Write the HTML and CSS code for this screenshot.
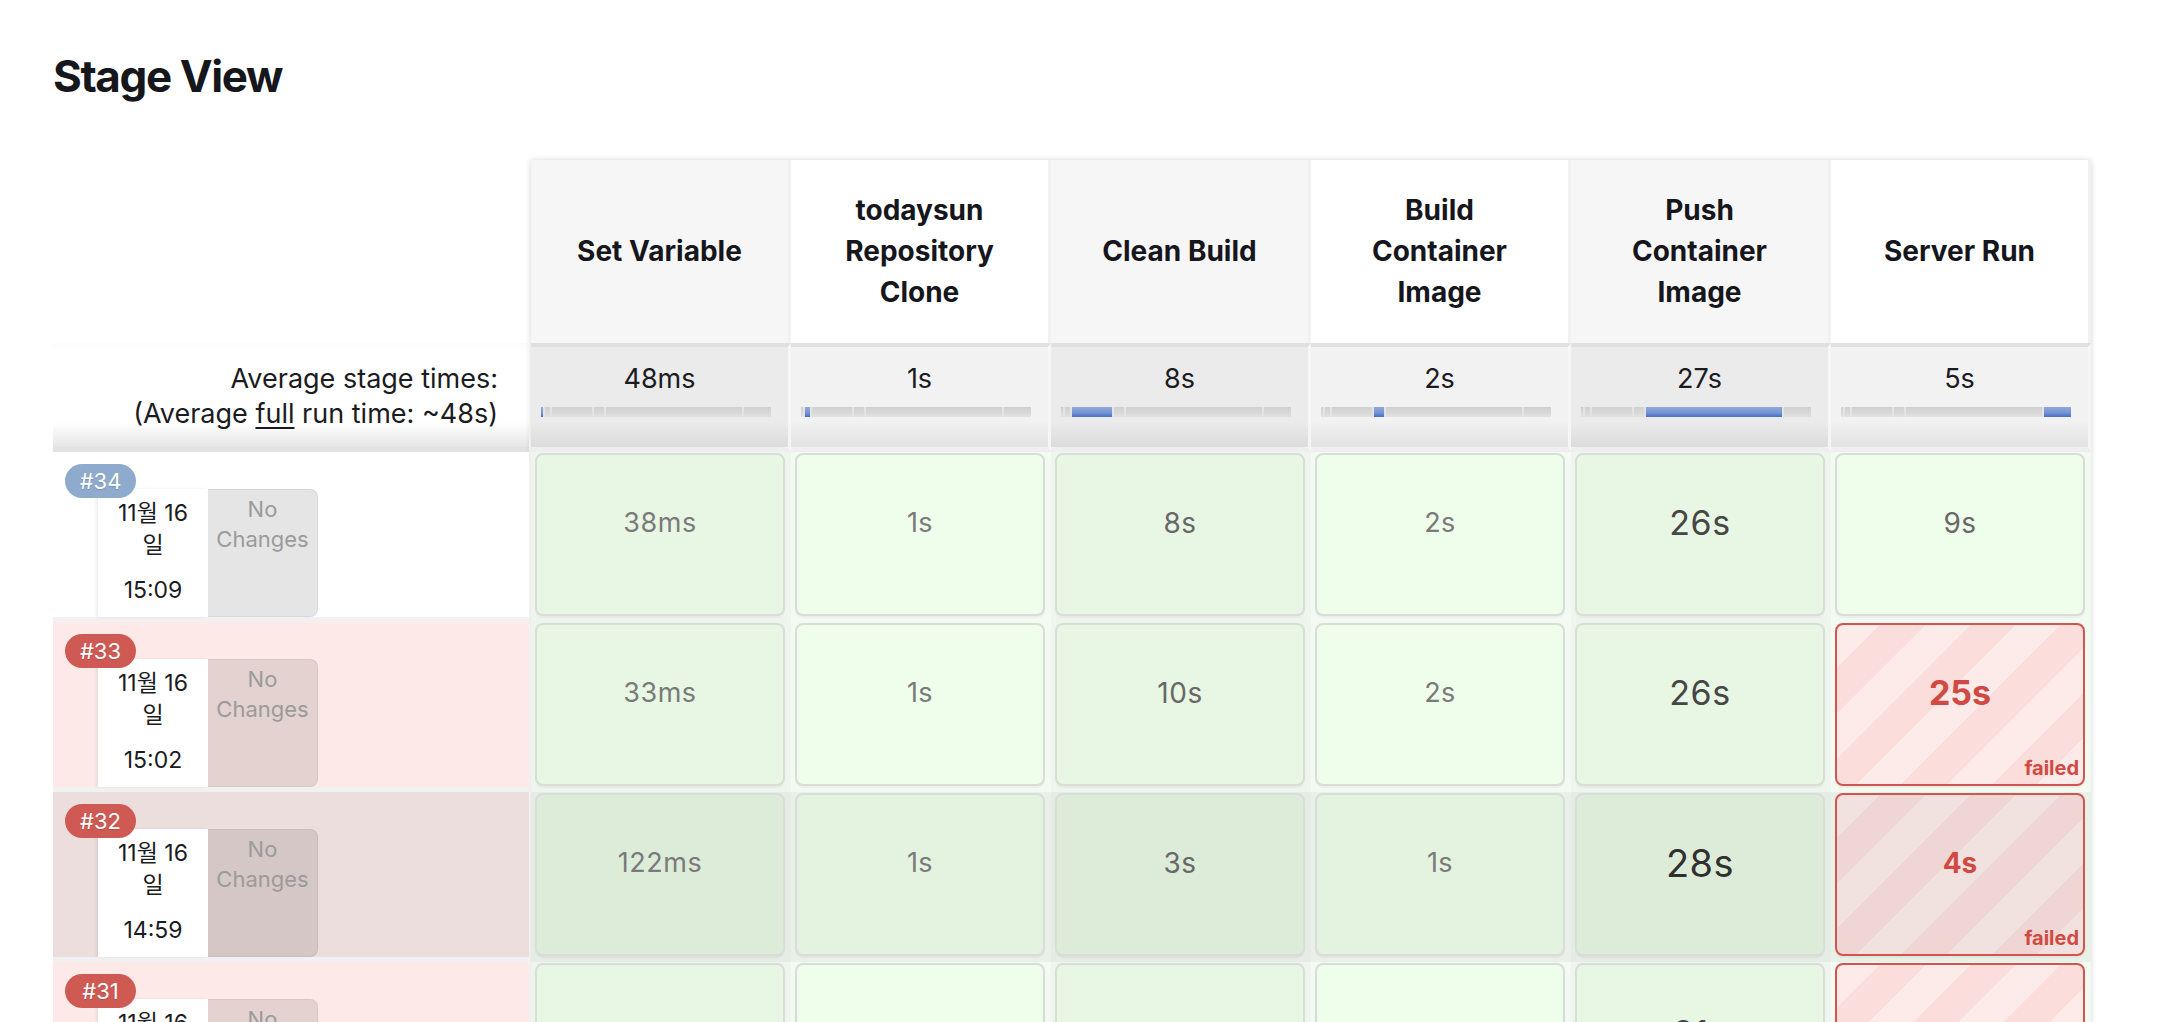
FILE: index.html
```html
<!DOCTYPE html>
<html lang="ko">
<head>
<meta charset="utf-8">
<title>Stage View</title>
<link rel="stylesheet" href="styles.css">
</head>
<body>
<h1 class="title">Stage View</h1>
<div class="table">
  <div class="left">
    <div class="lhead"></div>
    <div class="lavg">
      <div>Average stage times:</div>
      <div>(Average <u>full</u> run time: ~48s)</div>
    </div>
    <div class="lrow">
      <span class="badge ok">#34</span>
      <div class="card"><div>11월 16 일</div><div class="time">15:09</div></div>
      <div class="nochg">No Changes</div>
    </div>
    <div class="lrow fail">
      <span class="badge bad">#33</span>
      <div class="card"><div>11월 16 일</div><div class="time">15:02</div></div>
      <div class="nochg">No Changes</div>
    </div>
    <div class="lrow hot">
      <span class="badge bad">#32</span>
      <div class="card"><div>11월 16 일</div><div class="time">14:59</div></div>
      <div class="nochg">No Changes</div>
    </div>
    <div class="lrow fail">
      <span class="badge bad">#31</span>
      <div class="card"><div>11월 16 일</div><div class="time">14:55</div></div>
      <div class="nochg">No Changes</div>
    </div>
  </div>

  <div class="stages">
    <div class="sh">Set Variable</div>
    <div class="sh alt">todaysun Repository Clone</div>
    <div class="sh">Clean Build</div>
    <div class="sh alt">Build Container Image</div>
    <div class="sh">Push Container Image</div>
    <div class="sh alt">Server Run</div>

    <div class="sa">
      <div class="avg">48ms</div>
      <div class="bar"><span class="seg on" style="width:2px"></span><span class="seg" style="width:7px"></span><span class="seg" style="width:42px"></span><span class="seg" style="width:12px"></span><span class="seg" style="width:138px"></span><span class="seg" style="width:29px"></span></div>
    </div>
    <div class="sa alt">
      <div class="avg">1s</div>
      <div class="bar"><span class="seg" style="width:2px"></span><span class="seg on" style="width:7px"></span><span class="seg" style="width:42px"></span><span class="seg" style="width:12px"></span><span class="seg" style="width:138px"></span><span class="seg" style="width:29px"></span></div>
    </div>
    <div class="sa">
      <div class="avg">8s</div>
      <div class="bar"><span class="seg" style="width:2px"></span><span class="seg" style="width:7px"></span><span class="seg on" style="width:42px"></span><span class="seg" style="width:12px"></span><span class="seg" style="width:138px"></span><span class="seg" style="width:29px"></span></div>
    </div>
    <div class="sa alt">
      <div class="avg">2s</div>
      <div class="bar"><span class="seg" style="width:2px"></span><span class="seg" style="width:7px"></span><span class="seg" style="width:42px"></span><span class="seg on" style="width:12px"></span><span class="seg" style="width:138px"></span><span class="seg" style="width:29px"></span></div>
    </div>
    <div class="sa">
      <div class="avg">27s</div>
      <div class="bar"><span class="seg" style="width:2px"></span><span class="seg" style="width:7px"></span><span class="seg" style="width:42px"></span><span class="seg" style="width:12px"></span><span class="seg on" style="width:138px"></span><span class="seg" style="width:29px"></span></div>
    </div>
    <div class="sa alt">
      <div class="avg">5s</div>
      <div class="bar"><span class="seg" style="width:2px"></span><span class="seg" style="width:7px"></span><span class="seg" style="width:42px"></span><span class="seg" style="width:12px"></span><span class="seg" style="width:138px"></span><span class="seg on" style="width:29px"></span></div>
    </div>

    <!-- #34 -->
    <div class="sc"><div class="box d1">38ms</div></div>
    <div class="sc alt"><div class="box d1">1s</div></div>
    <div class="sc"><div class="box d2">8s</div></div>
    <div class="sc alt"><div class="box d1">2s</div></div>
    <div class="sc"><div class="box d3">26s</div></div>
    <div class="sc alt"><div class="box d2">9s</div></div>

    <!-- #33 -->
    <div class="sc"><div class="box d1">33ms</div></div>
    <div class="sc alt"><div class="box d1">1s</div></div>
    <div class="sc"><div class="box d2">10s</div></div>
    <div class="sc alt"><div class="box d1">2s</div></div>
    <div class="sc"><div class="box d3">26s</div></div>
    <div class="sc alt"><div class="box fail f1">25s<span class="failed">failed</span></div></div>

    <!-- #32 -->
    <div class="sc hot"><div class="box d1">122ms</div></div>
    <div class="sc alt hot"><div class="box d1">1s</div></div>
    <div class="sc hot"><div class="box d2">3s</div></div>
    <div class="sc alt hot"><div class="box d1">1s</div></div>
    <div class="sc hot"><div class="box d4">28s</div></div>
    <div class="sc alt hot"><div class="box fail f2">4s<span class="failed">failed</span></div></div>

    <!-- #31 -->
    <div class="sc"><div class="box d1">41ms</div></div>
    <div class="sc alt"><div class="box d1">1s</div></div>
    <div class="sc"><div class="box d2">4s</div></div>
    <div class="sc alt"><div class="box d1">1s</div></div>
    <div class="sc"><div class="box d3">21s</div></div>
    <div class="sc alt"><div class="box fail f2">4s<span class="failed">failed</span></div></div>
  </div>
</div>
</body>
</html>
```

FILE: styles.css
```css
html, body {
  margin: 0;
  height: 100%;
  overflow: hidden;
  background: #fff;
}
body {
  font-family: Inter, "Noto Sans CJK KR", sans-serif;
  color: #1b1b22;
  padding-left: 53px;
}
.title {
  font-size: 44px;
  line-height: 44px;
  font-weight: 700;
  margin: 54px 0 0;
  letter-spacing: -1.4px;
  color: #16161d;
}
.table {
  display: flex;
  align-items: flex-start;
  margin-top: 62px;
}

/* left column */
.left {
  width: 476px;
  margin-right: 2px;
  display: flex;
  flex-direction: column;
}
.lhead { height: 183px; }
.lavg {
  height: 109px;
  box-sizing: border-box;
  padding: 18px 31px 0 0;
  text-align: right;
  font-size: 27px;
  line-height: 35px;
  color: #1b1b22;
  background: linear-gradient(#fcfcfc, #fff 8%, #fff 76%, #e6e6e6);
  border-bottom: 5px solid #e2e2e2;
}
.lavg u { text-underline-offset: 4px; }
.lrow {
  position: relative;
  height: 170px;
  box-sizing: border-box;
  border-bottom: 5px solid #f1f1f1;
  padding: 37px 0 0 45px;
  display: flex;
  align-items: stretch;
  background: #fff;
}
.lrow.fail { background: #fdeae8; }
.lrow.hot { background: #ecdedc; }
.badge {
  position: absolute;
  left: 12px;
  top: 12px;
  z-index: 1;
  width: 71px;
  height: 34px;
  border-radius: 17px;
  color: #fff;
  font-size: 22px;
  line-height: 34px;
  text-align: center;
  text-shadow: 0 1px 1px rgba(0,0,0,.15);
}
.badge.ok { background: #8eaacc; }
.badge.bad { background: #cf5a53; }
.card {
  width: 110px;
  box-sizing: border-box;
  padding: 8px 10px 0;
  background: #fff;
  box-shadow: -2px 0 3px rgba(0,0,0,.07);
  text-align: center;
  font-size: 23px;
  line-height: 32px;
  color: #1b1b22;
}
.card .time { margin-top: 13px; }
.nochg {
  width: 110px;
  box-sizing: border-box;
  padding-top: 4px;
  background: rgba(0,0,0,.1);
  border: 1px solid rgba(0,0,0,.06);
  border-left: none;
  border-radius: 0 8px 8px 0;
  color: #9b9b9b;
  font-size: 22px;
  line-height: 30px;
  text-align: center;
}

/* stages */
.stages {
  display: grid;
  grid-template-columns: repeat(6, 260px);
  grid-template-rows: 183px 109px repeat(4, 170px);
  box-shadow: 0 0 6px rgba(0,0,0,.16);
  background: #f2f2f2;
}
.sh {
  display: flex;
  align-items: center;
  justify-content: center;
  text-align: center;
  padding: 0 36px;
  background: #f6f6f6;
  border-right: 3px solid #f1f1f1;
  font-weight: 700;
  font-size: 28px;
  line-height: 41px;
  color: #16161d;
}
.sh.alt { background: #fff; }
.sa {
  box-sizing: border-box;
  padding-top: 14px;
  border-top: 4px solid #e0e0e0;
  border-right: 3px solid #f6f6f6;
  border-bottom: 5px solid #eeeeee;
  background: linear-gradient(#ebebeb 0, #ebebeb 74%, #dcdcdc 100%);
}
.sa.alt { background: linear-gradient(#f2f2f2 0, #f2f2f2 74%, #e2e2e2 100%); }
.avg {
  text-align: center;
  font-size: 27px;
  line-height: 35px;
  color: #1b1b22;
}
.bar {
  display: flex;
  width: 230px;
  height: 10px;
  margin: 11px 0 0 10px;
}
.seg {
  box-sizing: border-box;
  height: 100%;
  background: linear-gradient(#d0d0d0, #d8d8d8 60%, #e2e2e2);
}
.seg + .seg { border-left: 2px solid #e4e4e4; }
.seg.on { background: linear-gradient(#8fa9db, #7694d4 55%, #4a6fc6); }

.sc {
  padding: 1px 6px 6px 4px;
  background: #eef5ec;
}
.sc.alt { background: #f3faf1; }
.sc.hot { background: #e5ece3; }
.sc.alt.hot { background: #e9f0e7; }
.box {
  position: relative;
  height: 163px;
  box-sizing: border-box;
  border: 2px solid #d9dcd8;
  border-radius: 8px;
  background: #e8f7e4;
  text-align: center;
  line-height: 136px;
  box-shadow: 0 2px 1px rgba(0,0,0,.04);
}
.alt .box { background: #effeeb; }
.hot .box { background: #ddecd9; }
.alt.hot .box { background: #e4f3e0; }
.d1 { font-size: 27px; letter-spacing: 0.5px; color: #7a7a7a; }
.d2 { font-size: 28px; letter-spacing: 0.5px; color: #686868; }
.d3 { font-size: 34px; letter-spacing: 0.5px; color: #464646; }
.d4 { font-size: 38px; letter-spacing: 0.5px; color: #303030; }
.box.fail {
  border-color: #d4554d;
  color: #d04a43;
  font-weight: 700;
  background: repeating-linear-gradient(-45deg, #fdebe9 0 32px, #fbdedb 32px 64px);
}
.hot .box.fail {
  background: repeating-linear-gradient(-45deg, #f1e1df 0 32px, #efd6d4 32px 64px);
}
.f1 { font-size: 34px; }
.f2 { font-size: 28px; }
.failed {
  position: absolute;
  right: 4px;
  bottom: 6px;
  font-size: 20px;
  line-height: 20px;
  font-weight: 700;
  letter-spacing: 0;
}
```
